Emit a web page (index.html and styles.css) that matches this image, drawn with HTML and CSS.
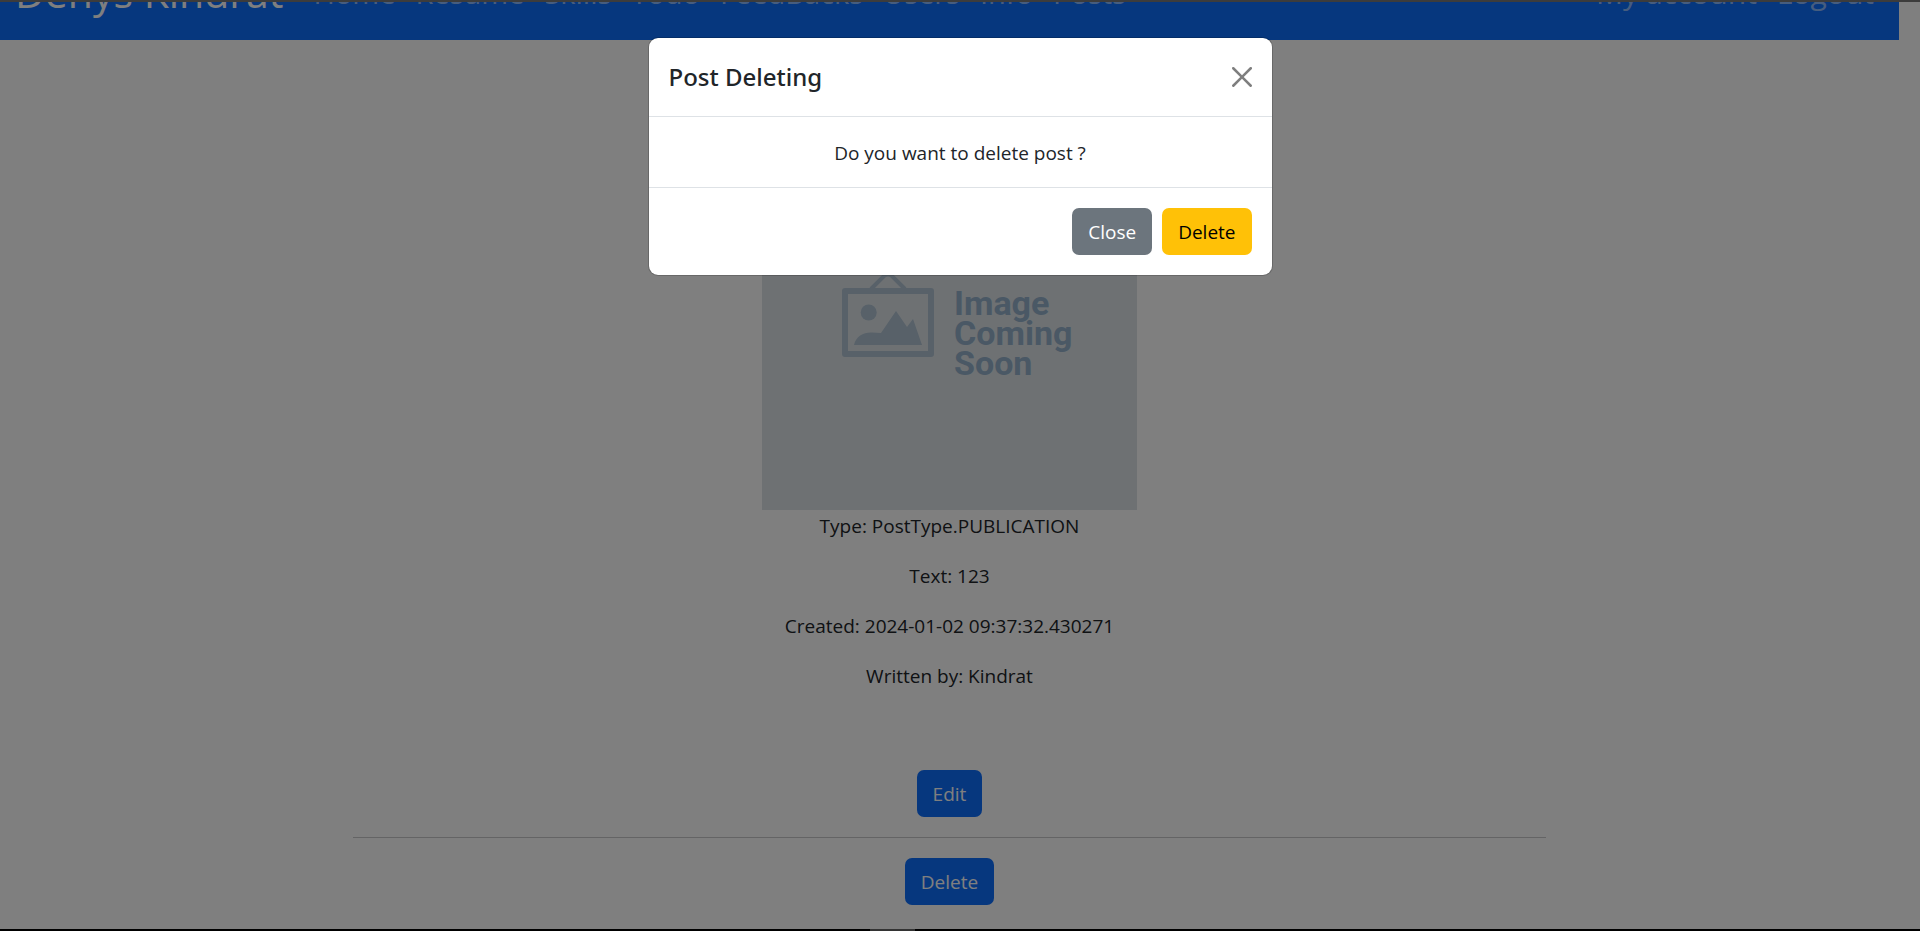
FILE: index.html
```html
<!DOCTYPE html>
<html lang="en">
<head>
<meta charset="utf-8">
<title>Denys Kindrat - Post</title>
<link rel="stylesheet" href="styles.css">
</head>
<body>
<div class="edge edge-top"></div>
<div class="page">
  <nav class="navbar">
    <a class="brand" href="#">Denys Kindrat</a>
    <div class="nav-links">
      <a href="#">Home</a>
      <a href="#">Resume</a>
      <a href="#">Skills</a>
      <a href="#">Todo</a>
      <a href="#">FeedBacks</a>
      <a href="#">Users</a>
      <a href="#">Info</a>
      <a href="#">Posts</a>
    </div>
    <div class="nav-links nav-account">
      <a href="#">My account</a>
      <a href="#">Logout</a>
    </div>
  </nav>
  <main class="post">
    <svg class="post-image" viewBox="0 0 375 375" role="img" aria-label="Image Coming Soon">
      <rect width="375" height="375" fill="#dce3e7"/>
      <g fill="none" stroke="#b0c2d2">
        <rect x="83" y="156" width="86" height="63" stroke-width="6" stroke-linejoin="round"/>
        <path d="M109 154 L122 141 Q126 138 130 141 L143 154" stroke-width="4"/>
      </g>
      <g fill="#b0c2d2">
        <circle cx="106.700" cy="177.500" r="8"/>
        <path d="M92 210 C94 201 102 197 110 197.500 L119 198 L134 176 L145 192 L151 184 L160 210 Z"/>
      </g>
      <g class="soon-text">
        <text x="192" y="180">Image</text>
        <text x="192" y="210">Coming</text>
        <text x="192" y="240">Soon</text>
      </g>
    </svg>
    <div class="details">
      <p>Type: PostType.PUBLICATION</p>
      <p>Text: 123</p>
      <p>Created: 2024-01-02 09:37:32.430271</p>
      <p>Written by: Kindrat</p>
    </div>
    <div class="actions">
      <a class="btn btn-primary" href="#">Edit</a>
      <hr>
      <button class="btn btn-primary" type="button">Delete</button>
    </div>
  </main>
  <div class="backdrop">
    <div class="modal" role="dialog" aria-modal="true" aria-labelledby="modal-title">
      <div class="modal-header">
        <h5 id="modal-title">Post Deleting</h5>
        <button class="close" type="button" aria-label="Close">
          <svg viewBox="0 0 16 16"><path d="M.293.293a1 1 0 0 1 1.414 0L8 6.586 14.293.293a1 1 0 1 1 1.414 1.414L9.414 8l6.293 6.293a1 1 0 0 1-1.414 1.414L8 9.414l-6.293 6.293a1 1 0 0 1-1.414-1.414L6.586 8 .293 1.707a1 1 0 0 1 0-1.414z"/></svg>
        </button>
      </div>
      <div class="modal-body">Do you want to delete post ?</div>
      <div class="modal-footer">
        <button class="btn btn-secondary" type="button">Close</button>
        <button class="btn btn-warning" type="button">Delete</button>
      </div>
    </div>
  </div>
</div>
<div class="edge edge-bottom"><span class="edge-mark"></span></div>
</body>
</html>
```
FILE: styles.css
```css
* { box-sizing: border-box; }

body {
  margin: 0;
  height: 100vh;
  display: flex;
  flex-direction: column;
  overflow: hidden;
  font-family: "Open Sans", "Noto Sans", sans-serif;
  font-size: 19px;
  line-height: 30px;
  color: #212529;
  background: #fff;
}

.edge { flex: none; height: 2px; }
.edge-top { background: #3c3c3c; }
.edge-bottom { background: #000; display: flex; padding-left: 870px; }
.edge-mark { width: 45px; background: #333; }

.page {
  position: relative;
  flex: 1;
  min-height: 0;
  overflow: hidden;
  padding-right: 21px;
}

.navbar {
  display: flex;
  align-items: flex-end;
  height: 38px;
  padding: 0 15px 23px;
  background: #0d6efd;
}
.navbar a { text-decoration: none; white-space: nowrap; }
.brand { font-size: 41px; line-height: 50px; color: #fff; margin-right: 30px; }
.nav-links {
  display: flex;
  gap: 20px;
  font-size: 29px;
  line-height: 40px;
  padding-bottom: 4px;
}
.nav-links a { color: rgba(255, 255, 255, 0.55); }
.nav-account { margin-left: auto; padding-right: 10px; font-size: 30px; }

.post {
  max-width: 1193px;
  margin: 0 auto;
  padding-top: 95px;
  text-align: center;
}
.post-image { display: block; width: 375px; margin: 0 auto; }
.soon-text {
  font-family: Roboto, sans-serif;
  font-size: 34px;
  font-weight: 700;
  fill: #94b0ca;
}
.details { padding-top: 1px; }
.details p { margin: 0 0 20px; }

.actions {
  display: flex;
  flex-direction: column;
  align-items: center;
  padding-top: 59px;
}
.actions hr {
  width: 100%;
  margin: 20px 0;
  border: 0;
  border-top: 1px solid #c8c9ca;
}

.btn {
  display: inline-block;
  padding: 9px 16px 8px;
  border: 0;
  border-radius: 7px;
  font: inherit;
  line-height: 30px;
  text-decoration: none;
}
.btn-primary { color: #fff; background: #0d6efd; }
.btn-secondary { color: #fff; background: #6c757d; }
.btn-warning { color: #000; background: #ffc107; }

.backdrop {
  position: absolute;
  inset: 0;
  background: rgba(0, 0, 0, 0.5);
}
.modal {
  max-width: 625px;
  margin: 35px auto;
  border: 1px solid rgba(0, 0, 0, 0.18);
  border-radius: 10px;
  background: #fff;
  background-clip: padding-box;
}
.modal-header {
  display: flex;
  align-items: center;
  justify-content: space-between;
  padding: 20px;
  border-bottom: 1px solid #dee2e6;
}
.modal-header h5 {
  margin: 0;
  font-family: "Noto Sans", "Open Sans", sans-serif;
  font-size: 24px;
  font-weight: 500;
  line-height: 38px;
}
.close {
  display: flex;
  padding: 0;
  border: 0;
  background: none;
  opacity: 0.5;
}
.close svg { width: 20px; height: 20px; }
.modal-body { padding: 21px 20px 19px; text-align: center; }
.modal-footer {
  display: flex;
  justify-content: flex-end;
  gap: 10px;
  padding: 20px;
  border-top: 1px solid #dee2e6;
}
```
